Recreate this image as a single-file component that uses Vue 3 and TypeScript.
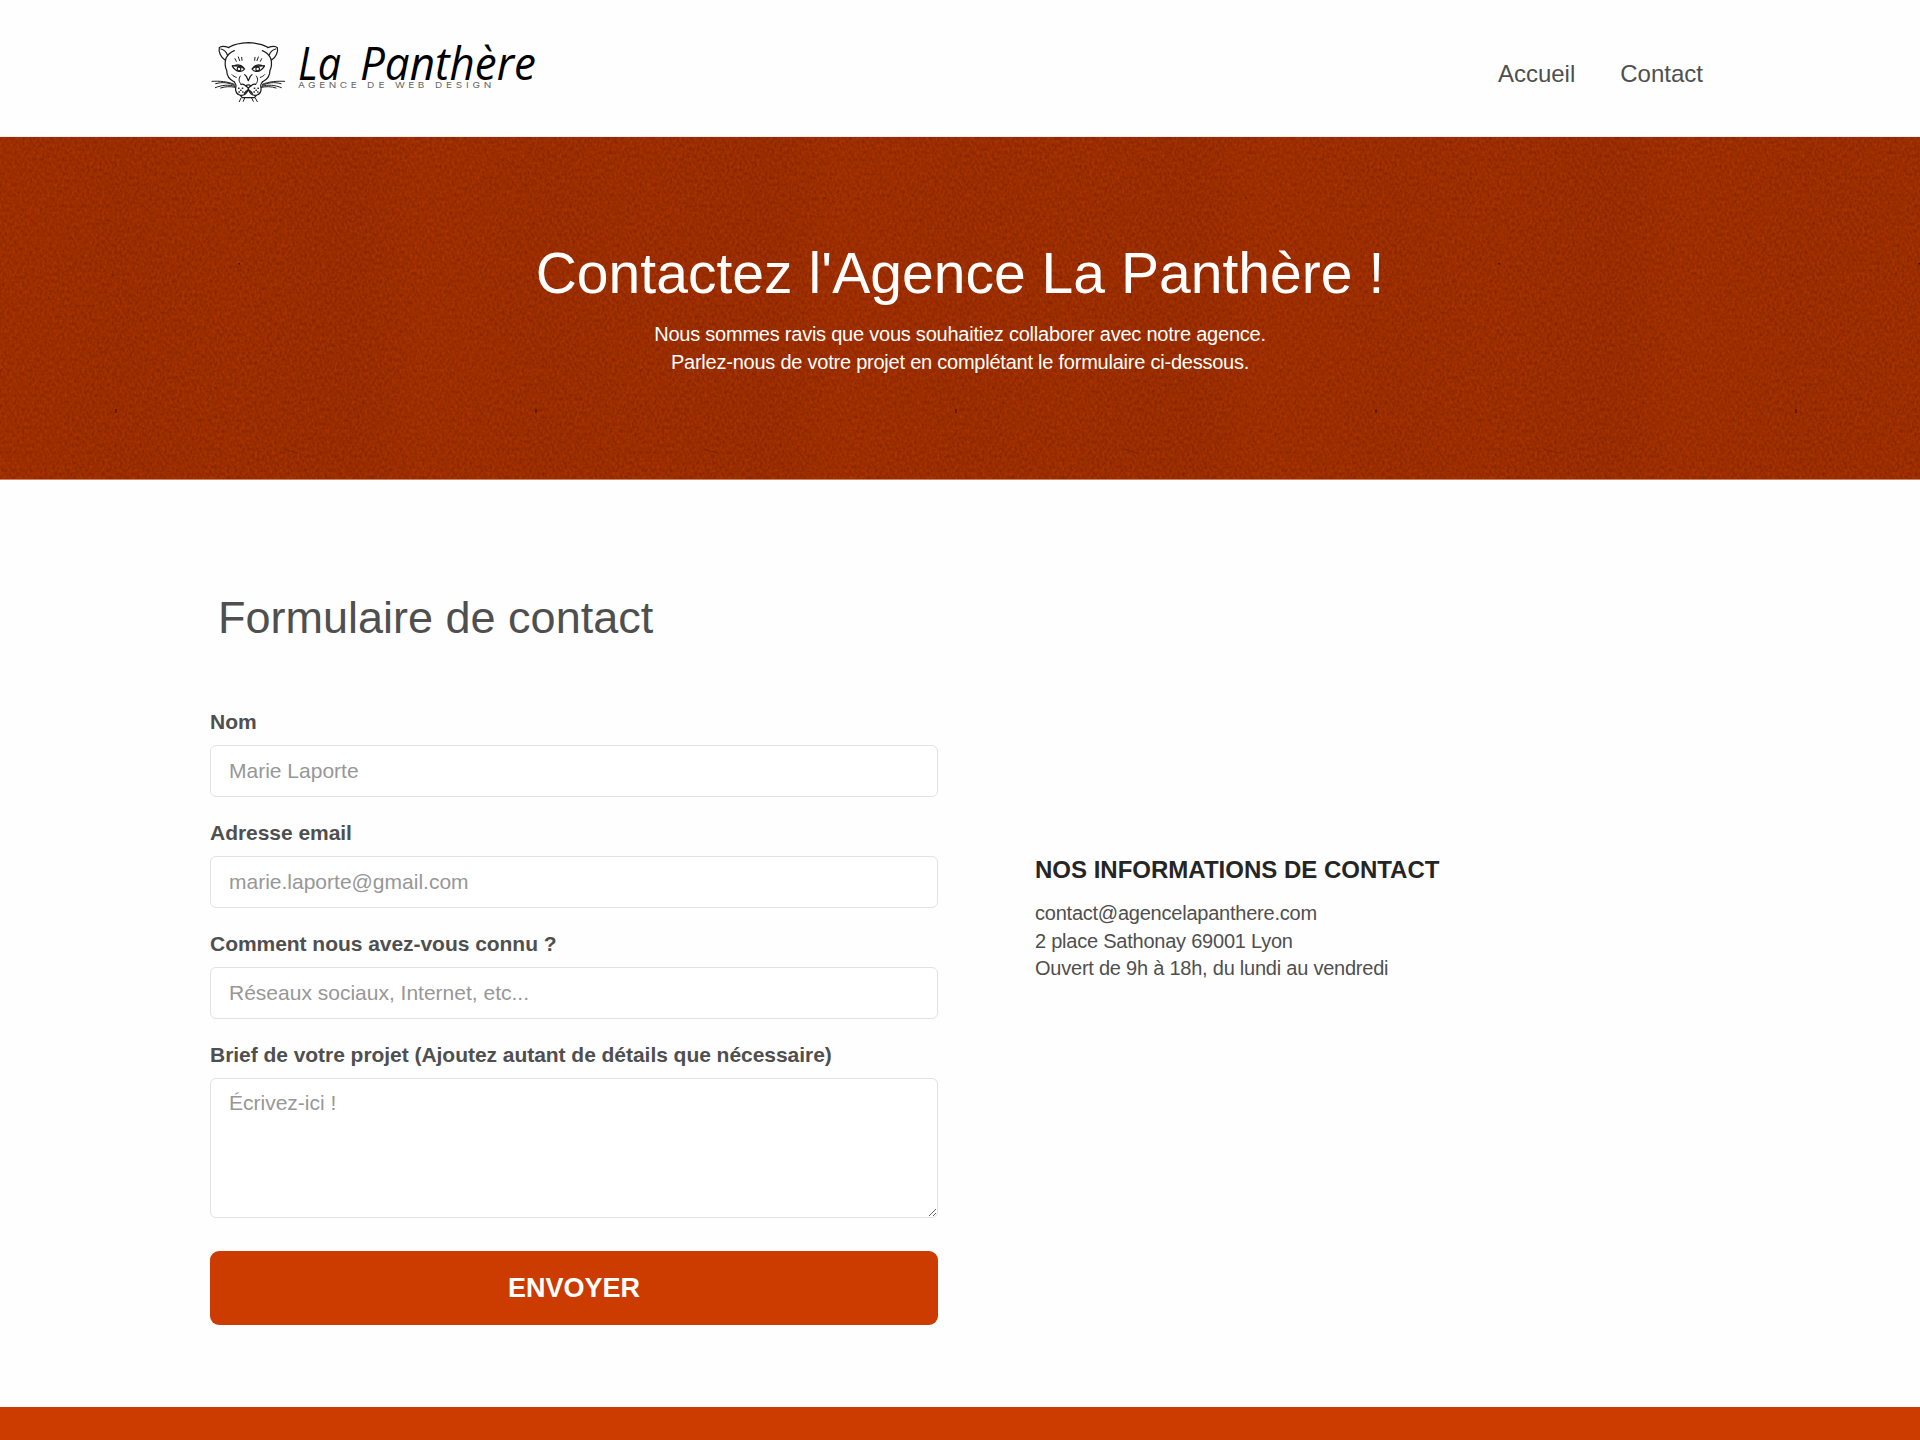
<script setup lang="ts">
interface Field {
  id: string
  label: string
  placeholder: string
  type: string
}

const links: string[] = ['Accueil', 'Contact']

const fields: Field[] = [
  { id: 'nom', label: 'Nom', placeholder: 'Marie Laporte', type: 'text' },
  { id: 'email', label: 'Adresse email', placeholder: 'marie.laporte@gmail.com', type: 'email' },
  { id: 'source', label: 'Comment nous avez-vous connu ?', placeholder: 'Réseaux sociaux, Internet, etc...', type: 'text' },
]

const infos: string[] = [
  'contact@agencelapanthere.com',
  '2 place Sathonay 69001 Lyon',
  'Ouvert de 9h à 18h, du lundi au vendredi',
]
</script>

<template>
  <div class="page">
    <header class="header">
      <svg class="logo" width="340" height="88" viewBox="210 20 340 88" role="img" aria-label="La Panthère">
        <g transform="translate(200 30) scale(0.33333)" fill="none" stroke="#1c1c1c" stroke-width="3.7" stroke-linecap="round" stroke-linejoin="round">
          <!-- crâne et oreilles -->
          <path d="M87 52C104 42 118 39 145 38C172 39 188 43 203 52" />
          <path d="M87 53C76 49 64 46 58 53C55 64 62 82 75 90M103 62C90 67 82 76 77 87M63 57C73 60 79 66 82 74" />
          <path d="M203 53C214 49 226 46 232 53C235 64 228 82 215 90M187 62C200 67 208 76 213 87M227 57C217 60 211 66 208 74" />
          <path d="M77 88C74 101 76 113 80 121C80 134 84 147 103 156" />
          <path d="M213 88C216 101 214 113 210 121C210 134 206 147 187 156" />
          <!-- front -->
          <path d="M105 86L109 94M115 81L119 92M125 82L126 91M185 86L181 94M175 81L171 92M165 82L164 91" stroke-width="3" />
          <!-- yeux -->
          <path d="M97 107C106 108 121 105 134 117C126 128 109 127 97 109M105 106C115 103 126 107 131 113" />
          <path d="M193 107C184 108 169 105 156 117C164 128 181 127 193 109M185 106C175 103 164 107 159 113" />
          <circle cx="117" cy="117" r="5.5" /><circle cx="173" cy="117" r="5.5" />
          <path d="M96 134C100 139 104 140 109 142M194 134C190 139 186 140 181 142M121 138C115 147 116 154 123 163M169 138C175 147 174 154 167 163" stroke-width="3" />
          <!-- museau -->
          <path d="M134 134L139 139L145 152L151 139L156 134" />
          <path d="M123 163C130 160 134 164 137 168C142 164 148 164 153 168C156 164 160 160 167 163M138 168L145 174L152 168M145 174C143 190 132 199 119 195C108 191 105 180 108 168C108 162 105 159 103 156M145 174C147 190 158 199 171 195C182 191 185 180 182 168C182 162 185 159 187 156" />
          <path d="M121 196L127 203H163L169 196M133 190C137 183 140 181 145 181C150 181 153 183 157 190" />
          <path d="M123 204L118 215M134 204L130 214M155 204L160 214M166 204L172 215" stroke-width="3" />
          <path d="M116 175h1M122 181h1M117 186h1M127 175h1M128 186h1M174 175h1M168 181h1M173 186h1M163 175h1M162 186h1" stroke-width="4.5" />
          <!-- moustaches -->
          <path d="M36 154C59 153 82 154 103 163M47 161C68 155 86 158 103 166M46 173C66 165 86 163 104 169M62 174C76 169 91 169 106 172" stroke-width="3" />
          <path d="M254 154C231 153 208 154 187 163M243 161C222 155 204 158 187 166M244 173C224 165 204 163 186 169M228 174C214 169 199 169 184 172" stroke-width="3" />
        </g>
        <g class="wordmark">
          <text x="298" y="80" textLength="43" lengthAdjust="spacingAndGlyphs">La</text>
          <text x="360" y="80" textLength="176" lengthAdjust="spacingAndGlyphs">Panthère</text>
        </g>
        <g class="baseline" transform="translate(298 88) scale(1.25 1)">
          <text x="0" y="0" textLength="47" lengthAdjust="spacing">AGENCE</text>
          <text x="55.2" y="0" textLength="14" lengthAdjust="spacing">DE</text>
          <text x="77.6" y="0" textLength="23.4" lengthAdjust="spacing">WEB</text>
          <text x="109.6" y="0" textLength="45" lengthAdjust="spacing">DESIGN</text>
        </g>
      </svg>
      <nav class="nav">
        <a v-for="link in links" :key="link">{{ link }}</a>
      </nav>
    </header>

    <section class="hero">
      <svg class="texture" width="1920" height="342" aria-hidden="true">
        <defs>
          <filter id="grain" x="0" y="0" width="100%" height="100%" color-interpolation-filters="sRGB">
            <feTurbulence type="fractalNoise" baseFrequency="0.4 0.28" numOctaves="3" seed="7" />
            <feColorMatrix values="0.22 0 0 0 0.495  0.11 0 0 0 0.121  0 0 0 0 0  0 0 0 0 1" />
          </filter>
          <pattern id="specks" width="420" height="342" patternUnits="userSpaceOnUse">
            <rect x="115" y="272" width="2" height="4" fill="#651b00" />
            <rect x="238" y="126" width="2" height="1.5" fill="#501500" />
            <path d="M284 312l6 2l8 2" stroke="#7a2200" fill="none" />
            <path d="M405 60l1 2M113 137v3" stroke="#6c1e00" />
          </pattern>
          <linearGradient id="bands" gradientUnits="userSpaceOnUse" x1="0" y1="0" x2="420" y2="0" spreadMethod="repeat">
            <stop offset="0" stop-color="#b43400" stop-opacity="0.1" />
            <stop offset="0.3" stop-color="#952b00" stop-opacity="0.08" />
            <stop offset="0.55" stop-color="#a53000" stop-opacity="0.05" />
            <stop offset="0.83" stop-color="#7d2400" stop-opacity="0.08" />
            <stop offset="1" stop-color="#b43400" stop-opacity="0.1" />
          </linearGradient>
        </defs>
        <rect width="1920" height="342" filter="url(#grain)" />
        <rect width="1920" height="342" fill="url(#bands)" />
        <rect width="1920" height="342" fill="url(#specks)" />
      </svg>
      <div class="hero-text">
        <h1>Contactez l'Agence La Panthère !</h1>
        <p>
          Nous sommes ravis que vous souhaitiez collaborer avec notre agence.<br />
          Parlez-nous de votre projet en complétant le formulaire ci-dessous.
        </p>
      </div>
    </section>

    <main class="main">
      <h2>Formulaire de contact</h2>
      <div class="columns">
        <form class="form" @submit.prevent>
          <div v-for="f in fields" :key="f.id" class="field">
            <label :for="f.id">{{ f.label }}</label>
            <input :id="f.id" :type="f.type" :placeholder="f.placeholder" />
          </div>
          <div class="field">
            <label for="brief">Brief de votre projet (Ajoutez autant de détails que nécessaire)</label>
            <textarea id="brief" placeholder="Écrivez-ici !"></textarea>
          </div>
          <button type="submit">ENVOYER</button>
        </form>
        <aside class="infos">
          <h3>NOS INFORMATIONS DE CONTACT</h3>
          <p v-for="line in infos" :key="line">{{ line }}</p>
        </aside>
      </div>
    </main>
    <footer class="footer"></footer>
  </div>
</template>

<style>
body {
  background: #fefefe;
  overflow: hidden;
}
</style>

<style scoped>
.page {
  display: flex;
  flex-direction: column;
  height: 1440px;
  overflow: hidden;
  font-family: 'Liberation Sans', Arial, sans-serif;
  color: #4f4f4f;
}
h1, h2, h3, p {
  margin: 0;
  font-weight: 400;
}
.header {
  box-sizing: border-box;
  display: flex;
  justify-content: space-between;
  align-items: flex-start;
  flex: none;
  height: 137px;
  padding: 20px 217px 0 210px;
  border-bottom: 1px solid #f3eeec;
}
.logo {
  display: block;
  overflow: visible;
}
.wordmark {
  font: italic 500 46px 'Open Sans', 'Noto Sans', sans-serif;
  fill: #000;
}
.baseline {
  font: 400 8px Inter, sans-serif;
  fill: #666;
}
.nav {
  display: flex;
  gap: 45px;
  margin-top: 40px;
  font-size: 24px;
  line-height: 28px;
}
.hero {
  position: relative;
  flex: none;
  box-sizing: border-box;
  height: 343px;
  background: #9b2d00;
  border-bottom: 1px solid #cf8365;
  overflow: hidden;
}
.texture {
  position: absolute;
  inset: 0;
}
.hero-text {
  position: relative;
  padding-top: 104px;
  text-align: center;
  color: #fff;
}
h1 {
  font-size: 57px;
  line-height: 64px;
  letter-spacing: 0.04px;
}
.hero p {
  margin-top: 15px;
  font-size: 20px;
  line-height: 28px;
  letter-spacing: -0.23px;
}
.main {
  flex: none;
  box-sizing: border-box;
  height: 927px;
  padding: 113px 210px 0;
}
h2 {
  margin-left: 8px;
  font-size: 45px;
  line-height: 50px;
  letter-spacing: 0;
}
.columns {
  display: flex;
  gap: 97px;
  margin-top: 67px;
}
.form {
  display: flex;
  flex-direction: column;
  gap: 24px;
  width: 728px;
}
.field {
  display: flex;
  flex-direction: column;
  gap: 11px;
}
label {
  font-size: 21px;
  font-weight: 700;
  line-height: 24px;
  letter-spacing: -0.04px;
}
input,
textarea {
  box-sizing: border-box;
  width: 100%;
  margin: 0;
  border: 1px solid #e2e2e2;
  border-radius: 6px;
  background: #fff;
  font: 21px 'Liberation Sans', Arial, sans-serif;
  letter-spacing: 0;
}
input {
  height: 52px;
  padding: 0 18px;
}
textarea {
  display: block;
  height: 140px;
  padding: 12px 18px;
  resize: vertical;
}
input::placeholder,
textarea::placeholder {
  color: #979797;
  opacity: 1;
}
button {
  height: 74px;
  margin-top: 9px;
  border: 0;
  border-radius: 9px;
  background: #cc3b00;
  color: #fff;
  font: 700 27px 'Liberation Sans', Arial, sans-serif;
}
.infos {
  padding-top: 146px;
}
h3 {
  margin-bottom: 16px;
  font-size: 24px;
  font-weight: 700;
  line-height: 28px;
  color: #252525;
}
.infos p {
  font-size: 20px;
  line-height: 27.5px;
  letter-spacing: -0.23px;
}
.footer {
  flex: none;
  height: 33px;
  background: #cc3b00;
}
</style>
